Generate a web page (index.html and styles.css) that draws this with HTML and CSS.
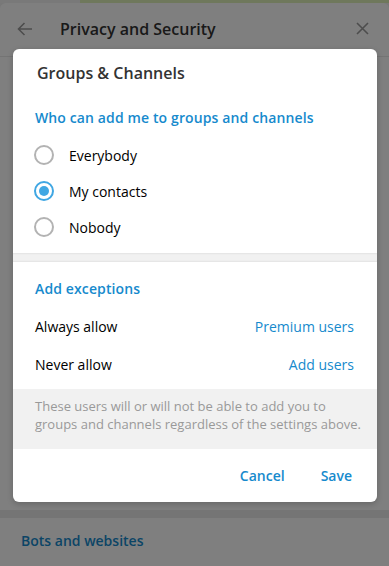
FILE: index.html
```html
<!DOCTYPE html>
<html lang="en">
<head>
    <meta charset="UTF-8">
    <meta name="viewport" content="width=device-width, initial-scale=1.0">
    <title>Privacy and Security</title>
    <link rel="stylesheet" href="styles.css">
</head>
<body>
    <div class="topstrip">
        <div class="strip-list"></div>
        <div class="strip-wall"></div>
    </div>
    <div class="panel">
        <div class="panel-head">
            <svg class="icon-back" width="16" height="14" viewBox="0 0 16 14">
                <path d="M15 7H1.5M7.5 1L1.5 7l6 6" fill="none" stroke="#9a9a9a" stroke-width="1.6"/>
            </svg>
            <span class="panel-title">Privacy and Security</span>
            <svg class="icon-close" width="13" height="13" viewBox="0 0 13 13">
                <path d="M1 1l11 11M12 1L1 12" fill="none" stroke="#9a9a9a" stroke-width="1.6"/>
            </svg>
        </div>
        <div class="panel-body"></div>
        <div class="panel-divider"></div>
        <div class="panel-section">Bots and websites</div>
    </div>

    <div class="overlay">
        <div class="modal">
            <div class="modal-title">Groups &amp; Channels</div>
            <div class="section-title">Who can add me to groups and channels</div>
            <div class="radios">
                <div class="radio-row"><span class="radio"></span>Everybody</div>
                <div class="radio-row"><span class="radio on"></span>My contacts</div>
                <div class="radio-row"><span class="radio"></span>Nobody</div>
            </div>
            <div class="band"></div>
            <div class="section-title sec2">Add exceptions</div>
            <div class="rows">
                <div class="row"><span>Always allow</span><span class="link">Premium users</span></div>
                <div class="row"><span>Never allow</span><span class="link">Add users</span></div>
            </div>
            <div class="info">These users will or will not be able to add you to groups and channels regardless of the settings above.</div>
            <div class="buttons">
                <span class="btn">Cancel</span>
                <span class="btn">Save</span>
            </div>
        </div>
    </div>
</body>
</html>
```

FILE: styles.css
```css
*{
    box-sizing: border-box;
}
html, body{
    margin: 0;
    height: 100%;
}
body{
    font-family: "Open Sans", "Liberation Sans", sans-serif;
    font-size: 14px;
    color: #000;
    background: #f0f0f0;
    overflow: hidden;
    position: relative;
}
.topstrip{
    display: flex;
    height: 3px;
}
.strip-list{
    width: 80px;
    background: #f2f2f2;
}
.strip-wall{
    flex: 1;
    background: #dff0b8;
}
.panel{
    background: #fff;
    height: calc(100% - 3px);
    border-radius: 6px 6px 0 0;
    display: flex;
    flex-direction: column;
}
.panel-head{
    height: 54px;
    display: flex;
    align-items: center;
    padding: 0 20px 2px 17px;
    border-bottom: 1px solid #e8e8e8;
}
.panel-title{
    flex: 1;
    margin-left: 27px;
    font-size: 16px;
    font-weight: 600;
    color: #333;
}
.panel-body{
    flex: 1;
}
.panel-divider{
    height: 8px;
    background: #ebebeb;
}
.panel-section{
    height: 48px;
    padding: 13px 21px 0;
    color: #168acd;
    font-weight: 600;
    font-size: 14px;
}

.overlay{
    position: absolute;
    top: 0;
    left: 0;
    right: 0;
    bottom: 0;
    background: rgba(0, 0, 0, 0.5);
    padding: 49px 12px 0 13px;
}
.modal{
    background: #fff;
    border-radius: 6px;
    overflow: hidden;
    box-shadow: 0 2px 6px rgba(0,0,0,0.2);
}
.modal-title{
    padding: 13px 24px 0;
    height: 47px;
    line-height: 22px;
    font-size: 16px;
    font-weight: 600;
    color: #333;
}
.section-title{
    padding: 12px 22px 0;
    line-height: 20px;
    color: #168acd;
    font-weight: 600;
    letter-spacing: 0.12px;
}
.radios{
    padding: 9px 0 8px 21px;
}
.radio-row{
    height: 36px;
    display: flex;
    align-items: center;
    color: #000;
}
.radio{
    width: 20px;
    height: 20px;
    border: 2px solid #b3b3b3;
    border-radius: 50%;
    margin-right: 15px;
    display: flex;
    align-items: center;
    justify-content: center;
}
.radio.on{
    border-color: #40a7e3;
}
.radio.on::after{
    content: "";
    width: 10px;
    height: 10px;
    border-radius: 50%;
    background: #40a7e3;
}
.band{
    height: 9px;
    background: #f1f1f1;
    box-shadow: inset 0 2px 2px -1px rgba(0,0,0,0.06), inset 0 -2px 2px -1px rgba(0,0,0,0.06);
}
.sec2{
    padding-top: 17px;
}
.rows{
    padding: 9px 23px 5px 22px;
}
.row{
    height: 38px;
    display: flex;
    align-items: center;
    justify-content: space-between;
    padding-bottom: 1px;
}
.link{
    color: #168acd;
}
.info{
    background: #f1f1f1;
    padding: 8px 10px 16px 22px;
    line-height: 18px;
    font-size: 13px;
    color: #999;
}
.buttons{
    height: 53px;
    display: flex;
    justify-content: flex-end;
    align-items: center;
    gap: 36px;
    padding-right: 25px;
}
.btn{
    color: #168acd;
    font-weight: 600;
}
```
